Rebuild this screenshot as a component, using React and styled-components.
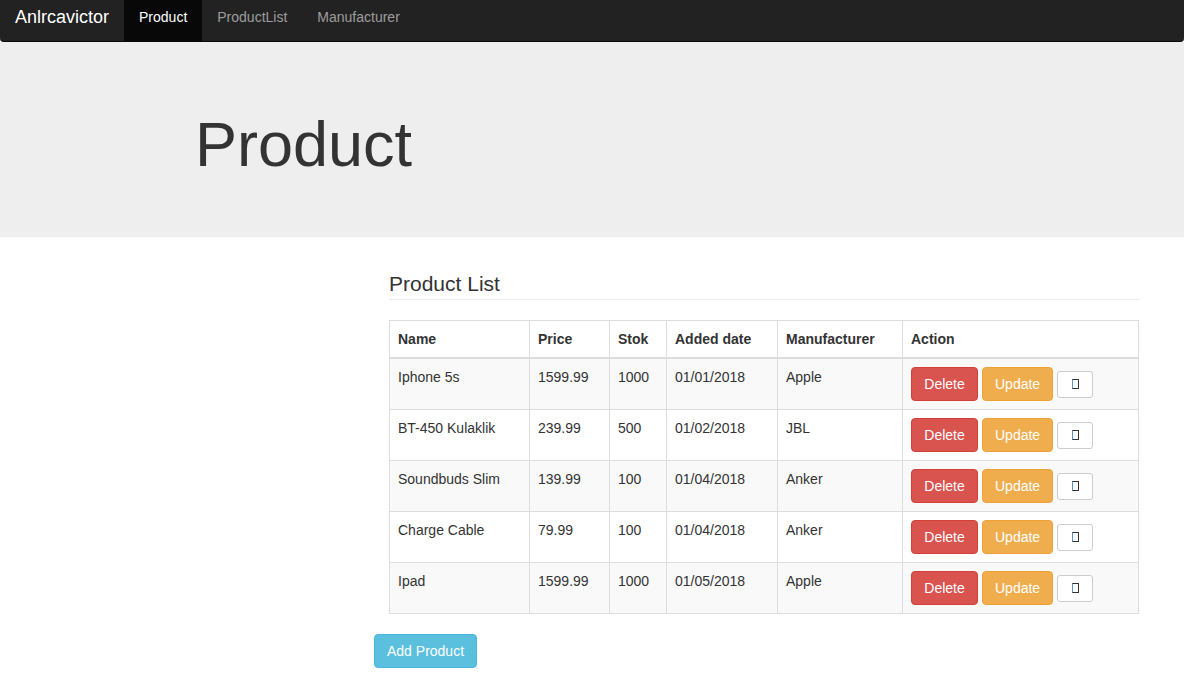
import React from "react";
import styled, { createGlobalStyle } from "styled-components";

const GlobalStyle = createGlobalStyle`
  html, body {
    margin: 0;
    padding: 0;
    background: #fff;
    font-family: "Liberation Sans", Arial, Helvetica, sans-serif;
    font-size: 14px;
    line-height: 1.42857;
    color: #333;
  }
  * { box-sizing: border-box; }
`;

const Navbar = styled.nav`
  display: flex;
  height: 42px;
  background: #222;
  border-bottom: 1px solid #080808;
  border-radius: 0 0 4px 4px;
`;

const Brand = styled.a`
  padding: 7px 15px 15px;
  font-size: 18px;
  line-height: 20px;
  color: #fff;
  text-decoration: none;
`;

const NavItem = styled.a`
  padding: 7px 15px 15px;
  line-height: 20px;
  color: ${p => (p.active ? "#fff" : "#9d9d9d")};
  background: ${p => (p.active ? "#080808" : "transparent")};
  text-decoration: none;
`;

const Jumbotron = styled.header`
  height: 195px;
  padding: 68px 0 0 195px;
  background: #eee;
`;

const BigTitle = styled.h1`
  margin: 0;
  font-size: 63px;
  font-weight: 500;
  line-height: 1.1;
  color: #333;
`;

const Content = styled.main`
  padding: 35px 0 0 374px;
`;

const Section = styled.section`
  width: 766px;
  padding-left: 15px;
`;

const PageHeader = styled.h3`
  margin: 0 0 20px;
  padding-bottom: 4px;
  border-bottom: 1px solid #eee;
  font-size: 21px;
  font-weight: 500;
  line-height: 1.1;
`;

const Table = styled.table`
  width: 749px;
  table-layout: fixed;
  border-collapse: collapse;
  border: 1px solid #ddd;
`;

const Th = styled.th`
  padding: 8px;
  text-align: left;
  font-weight: bold;
  border: 1px solid #ddd;
  border-bottom-width: 2px;
  line-height: 20px;
`;

const Row = styled.tr`
  background: ${p => (p.striped ? "#f9f9f9" : "#fff")};
`;

const Td = styled.td`
  padding: 8px;
  border: 1px solid #ddd;
  vertical-align: top;
  line-height: 20px;
  height: 51px;
`;

const Actions = styled.div`
  display: flex;
  align-items: center;
  gap: 4px;
`;

const Btn = styled.button`
  display: inline-block;
  min-width: ${p => p.minWidth || 0}px;
  padding: 6px 12px;
  font-family: inherit;
  font-size: 14px;
  line-height: 20px;
  border-radius: 4px;
  border: 1px solid ${p => p.border};
  background: ${p => p.bg};
  color: #fff;
  cursor: pointer;
`;

const SmallBtn = styled.button`
  display: flex;
  align-items: center;
  justify-content: center;
  width: 36px;
  height: 27px;
  background: #fff;
  border: 1px solid #ccc;
  border-radius: 3px;
  padding: 0;
`;

const Tofu = styled.span`
  display: block;
  width: 7px;
  height: 10px;
  border: 1px solid #333;
  border-left-color: #5b8fd6;
`;

const Footer = styled.div`
  padding-top: 20px;
`;

const products = [
  ["Iphone 5s", "1599.99", "1000", "01/01/2018", "Apple"],
  ["BT-450 Kulaklik", "239.99", "500", "01/02/2018", "JBL"],
  ["Soundbuds Slim", "139.99", "100", "01/04/2018", "Anker"],
  ["Charge Cable", "79.99", "100", "01/04/2018", "Anker"],
  ["Ipad", "1599.99", "1000", "01/05/2018", "Apple"],
];

const widths = [140, 80, 57, 111, 125, 236];
const heads = ["Name", "Price", "Stok", "Added date", "Manufacturer", "Action"];

export default function App() {
  return (
    <>
      <GlobalStyle />
      <Navbar>
        <Brand href="#">Anlrcavictor</Brand>
        <NavItem href="#" active>Product</NavItem>
        <NavItem href="#">ProductList</NavItem>
        <NavItem href="#">Manufacturer</NavItem>
      </Navbar>
      <Jumbotron>
        <BigTitle>Product</BigTitle>
      </Jumbotron>
      <Content>
        <Section>
          <PageHeader>Product List</PageHeader>
          <Table>
            <colgroup>
              {widths.map((w, i) => <col key={i} style={{ width: w }} />)}
            </colgroup>
            <thead>
              <tr>
                {heads.map(h => <Th key={h}>{h}</Th>)}
              </tr>
            </thead>
            <tbody>
              {products.map((p, i) => (
                <Row key={i} striped={i % 2 === 0}>
                  {p.map((c, j) => <Td key={j}>{c}</Td>)}
                  <Td>
                    <Actions>
                      <Btn bg="#d9534f" border="#d43f3a" minWidth={67}>Delete</Btn>
                      <Btn bg="#f0ad4e" border="#eea236" minWidth={71}>Update</Btn>
                      <SmallBtn><Tofu /></SmallBtn>
                    </Actions>
                  </Td>
                </Row>
              ))}
            </tbody>
          </Table>
        </Section>
        <Footer>
          <Btn bg="#5bc0de" border="#46b8da" minWidth={103}>Add Product</Btn>
        </Footer>
      </Content>
    </>
  );
}
